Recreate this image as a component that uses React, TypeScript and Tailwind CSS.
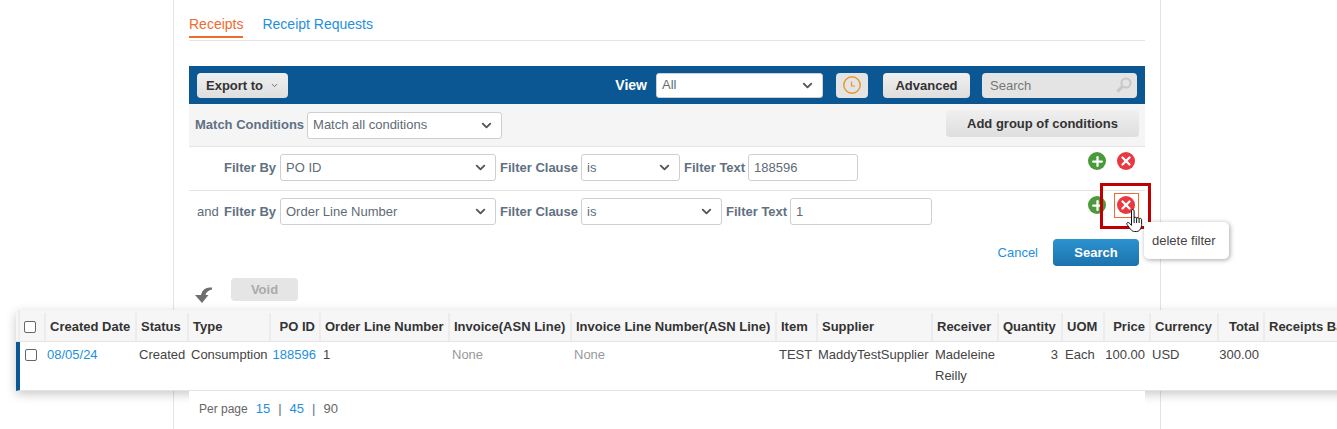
import { ChevronDown, Plus, X } from 'lucide-react';

const headerColumns =
  'grid-cols-[28px_91px_52px_82px_50px_129px_122px_205px_41px_115px_66px_64px_42px_46px_68px_46px_140px]';
// the row has a 4px blue edge, so its first column is 4px narrower
const rowColumns =
  'grid-cols-[24px_91px_52px_82px_50px_129px_122px_205px_41px_115px_66px_64px_42px_46px_68px_46px_140px]';

const headers = [
  { label: 'Created Date' },
  { label: 'Status' },
  { label: 'Type' },
  { label: 'PO ID', right: true },
  { label: 'Order Line Number' },
  { label: 'Invoice(ASN Line)' },
  { label: 'Invoice Line Number(ASN Line)' },
  { label: 'Item' },
  { label: 'Supplier' },
  { label: 'Receiver' },
  { label: 'Quantity' },
  { label: 'UOM' },
  { label: 'Price', right: true },
  { label: 'Currency' },
  { label: 'Total', right: true },
  { label: 'Receipts Balance' },
];

function Select({ value, className }: { value: string; className: string }) {
  return (
    <div className={`flex h-[27px] shrink-0 items-center justify-between rounded-[3px] border border-[#cfcfcf] bg-white pl-[5px] pr-[7px] text-[#5f6b76] ${className}`}>
      <span>{value}</span>
      <ChevronDown size={15} strokeWidth={3} className="text-[#555]" />
    </div>
  );
}

function RoundIcons() {
  return (
    <div className="mr-[10px] flex shrink-0 gap-[11px]">
      <span className="flex size-[18px] items-center justify-center rounded-full bg-[#4a9a3b] text-white">
        <Plus size={15} strokeWidth={3.6} />
      </span>
      <span className="flex size-[18px] items-center justify-center rounded-full bg-[#e9383f] text-white">
        <X size={14} strokeWidth={4} />
      </span>
    </div>
  );
}

function FilterLabel({ children, width }: { children: string; width: string }) {
  return <span className={`mx-[4px] shrink-0 whitespace-nowrap font-bold text-[#5f7182] ${width}`}>{children}</span>;
}

function Checkbox() {
  return <span className="block size-[12px] rounded-[2px] border border-[#666] bg-white" />;
}

export default function App() {
  return (
    <div className="relative h-[429px] w-[1337px] overflow-hidden bg-white font-['Liberation_Sans',sans-serif] text-[13px] text-[#333]">
      <main className="ml-[173px] h-[429px] w-[988px] border-x border-[#e4e4e4] px-[15px]">
        <nav className="flex h-[41px] items-start gap-[19px] border-b border-[#e4e4e4] pt-[15px] text-[14px] leading-[18px]">
          <a className="h-[23px] border-b-2 border-[#f26a2e] text-[#f26a2e]">Receipts</a>
          <a className="text-[#1e8fe0]">Receipt Requests</a>
        </nav>

        <div className="mt-[25px] flex h-[38px] items-center bg-[#0a5793] px-[8px]">
          <button className="flex h-[25px] w-[91px] items-center gap-[7px] rounded-[4px] bg-linear-to-b from-[#f0f0f0] to-[#dedede] pl-[9px] pt-[1px] font-bold text-[#333]">
            Export to <ChevronDown size={9} strokeWidth={2.5} className="text-[#666]" />
          </button>
          <span className="ml-auto pt-[1px] text-[14px] font-bold text-white">View</span>
          <div className="ml-[9px] flex h-[25px] w-[167px] items-center justify-between rounded-[3px] border border-[#cfcfcf] bg-white pl-[5px] pr-[7px] text-[#5f6b76]">
            <span>All</span>
            <ChevronDown size={15} strokeWidth={3} className="text-[#555]" />
          </div>
          <button className="ml-[13px] flex h-[25px] w-[32px] items-center justify-center rounded-[4px] bg-[#e4e4e4]">
            <svg width="20" height="20" viewBox="0 0 20 20" fill="none" stroke="#e8952a">
              <circle cx="10" cy="10" r="8.2" strokeWidth="1.4" />
              <path d="M9.5 6.5v4.5h3.5" strokeWidth="1.2" />
            </svg>
          </button>
          <button className="ml-[15px] h-[25px] w-[87px] rounded-[4px] bg-linear-to-b from-[#f0f0f0] to-[#dedede] pt-[1px] font-bold text-[#333]">
            Advanced
          </button>
          <div className="ml-[12px] flex h-[25px] w-[155px] items-center justify-between rounded-[4px] bg-[#e4e4e4] pl-[8px] pr-[5px] pt-[1px] text-[#777]">
            <span>Search</span>
            <svg width="17" height="17" viewBox="0 0 17 17" fill="none" stroke="#c8c8c8">
              <circle cx="11" cy="6" r="4.6" strokeWidth="2" />
              <path d="M7.6 9.4 2.4 14.6" strokeWidth="3" />
            </svg>
          </div>
        </div>

        <div className="flex h-[43px] items-center border-b border-[#e4e4e4] bg-[#f5f5f5] pl-[6px] pr-[6px]">
          <span className="font-bold text-[#5f7182]">Match Conditions</span>
          <Select value="Match all conditions" className="ml-[3px] w-[195px]" />
          <button className="ml-auto -mt-[3px] h-[27px] w-[193px] rounded-[4px] bg-linear-to-b from-[#f0f0f0] to-[#dedede] font-bold text-[#333]">
            Add group of conditions
          </button>
        </div>

        <div className="flex h-[44px] items-start border-b border-[#e4e4e4] pt-[7px] leading-[27px]">
          <span className="w-[87px] shrink-0 text-right font-bold text-[#5f7182]">Filter By</span>
          <Select value="PO ID" className="ml-[4px] w-[216px]" />
          <FilterLabel width="w-[77px]">Filter Clause</FilterLabel>
          <Select value="is" className="w-[99px]" />
          <FilterLabel width="w-[60px]">Filter Text</FilterLabel>
          <div className="flex h-[27px] w-[110px] items-center rounded-[3px] border border-[#cfcfcf] pl-[5px] text-[#5f6b76]">188596</div>
          <div className="ml-auto -mt-[2px]">
            <RoundIcons />
          </div>
        </div>

        <div className="flex h-[41px] items-start pt-[7px] leading-[27px]">
          <span className="flex w-[87px] shrink-0 justify-between pl-[8px]">
            <span className="text-[#5f6b76]">and</span>
            <span className="font-bold text-[#5f7182]">Filter By</span>
          </span>
          <Select value="Order Line Number" className="ml-[4px] w-[216px]" />
          <FilterLabel width="w-[77px]">Filter Clause</FilterLabel>
          <Select value="is" className="w-[141px]" />
          <FilterLabel width="w-[60px]">Filter Text</FilterLabel>
          <div className="flex h-[27px] w-[142px] items-center rounded-[3px] border border-[#cfcfcf] pl-[5px] text-[#5f6b76]">1</div>
          <div className="ml-auto -mt-[2px]">
            <RoundIcons />
          </div>
        </div>

        <div className="mt-[7px] flex h-[27px] items-center justify-end gap-[15px] pr-[6px]">
          <a className="text-[#1e8fe0]">Cancel</a>
          <button className="h-[27px] w-[86px] rounded-[4px] bg-linear-to-b from-[#2c92d0] to-[#1c73ad] font-bold text-white">
            Search
          </button>
        </div>

        <div className="mt-[12px] flex h-[23px] items-start">
          <svg width="18" height="17" viewBox="0 0 18 17" className="ml-[6px] mt-[9px] shrink-0" fill="#6e6e6e">
            <path d="M17 .5C11 .5 7.5 2 6 8H0l7 8 6.5-8h-3c.6-3 3-4.8 6.5-5.500Z" />
          </svg>
          <button className="ml-[18px] h-[23px] w-[67px] rounded-[4px] bg-[#e5e5e5] font-bold text-[#aaaaaa]">Void</button>
        </div>

        <div className="relative mt-[9px] -ml-[173px] w-[1400px] bg-white shadow-[0_3px_10px_rgba(0,0,0,0.22)]">
          <div className={`grid h-[32px] items-stretch border-b border-[#e4e4e4] bg-[#f6f6f6] font-bold text-[#333] ${headerColumns}`}>
            <div className="ml-[2px] flex items-center border-l-2 border-[#ececec] pl-[4px] pt-[3px]">
              <Checkbox />
            </div>
            {headers.map((h) => (
              <div
                key={h.label}
                className={`mt-[3px] flex items-center whitespace-nowrap border-l-2 border-[#ececec] px-[4px] ${h.right ? 'justify-end' : ''}`}
              >
                {h.label}
              </div>
            ))}
          </div>
          <div className={`grid h-[49px] border-b border-[#e4e4e4] border-l-4 border-l-[#0a5793] pt-[2px] leading-[21px] text-[#444] ${rowColumns}`}>
            <div className="pl-[5px] pt-[5px]">
              <Checkbox />
            </div>
            <div className="pl-[3px] text-[#1e8fe0]">08/05/24</div>
            <div className="pl-[4px]">Created</div>
            <div className="whitespace-nowrap pl-[4px]">Consumption</div>
            <div className="pr-[3px] text-right text-[#1e8fe0]">188596</div>
            <div className="pl-[4px]">1</div>
            <div className="pl-[4px] text-[#999]">None</div>
            <div className="pl-[4px] text-[#999]">None</div>
            <div className="pl-[4px]">TEST</div>
            <div className="whitespace-nowrap pl-[2px]">MaddyTestSupplier</div>
            <div className="pl-[4px]">Madeleine Reilly</div>
            <div className="pr-[3px] text-right">3</div>
            <div className="pl-[4px]">Each</div>
            <div className="whitespace-nowrap pr-[4px] text-right">100.00</div>
            <div className="pl-[3px]">USD</div>
            <div className="pr-[4px] text-right">300.00</div>
            <div />
          </div>
        </div>

        <div className="relative flex h-[36px] items-center gap-[8px] bg-white pl-[10px] text-[13px] text-[#666]">
          <span className="text-[12px]">Per page</span>
          <a className="text-[#1e8fe0]">15</a>
          <span className="text-[#5f7182]">|</span>
          <a className="text-[#1e8fe0]">45</a>
          <span className="text-[#5f7182]">|</span>
          <span>90</span>
        </div>
      </main>

      <div className="absolute left-[1100px] top-[183px] h-[46px] w-[51px] border-[3px] border-[#c00000]" />
      <div className="absolute left-[1114px] top-[193px] h-[25px] w-[25px] border border-[#f26a2e]" />
      <div className="absolute left-[1144px] top-[222px] flex h-[37px] w-[85px] items-center rounded-[5px] bg-white pl-[8px] text-[#444] shadow-[1px_1px_5px_rgba(0,0,0,0.35)]">
        delete filter
      </div>
      <svg width="21" height="24" viewBox="0 0 21 24" className="absolute left-[1125px] top-[209px]" fill="#fff" stroke="#111" strokeWidth="1">
        <path d="M6.500 1.800c0-1.700 2.600-1.700 2.600 0V9c.3-1 2.200-1 2.500.300.400-.9 2.200-.8 2.500.5.400-.8 2.300-.7 2.500.7v5c0 3-1.500 7-5 7H9.500c-3 0-5-3.500-7.500-7-.9-1.500 1-2.800 2.200-1.500l2.300 2.300Z" />
        <path d="M9.100 9v5M11.600 9.300V14M14.100 9.800V14" fill="none" />
      </svg>
    </div>
  );
}
